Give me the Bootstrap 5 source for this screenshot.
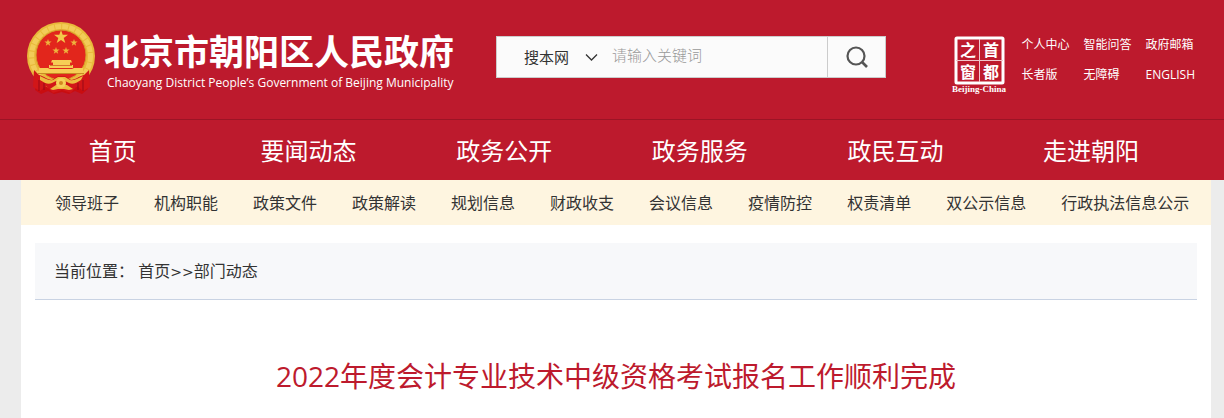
<!DOCTYPE html>
<html lang="zh-CN">
<head>
<meta charset="utf-8">
<meta name="viewport" content="width=device-width, initial-scale=1">
<title>北京市朝阳区人民政府</title>
<link href="https://cdn.jsdelivr.net/npm/bootstrap@5.3.0/dist/css/bootstrap.min.css" rel="stylesheet">
<style>
  body { font-family: "Open Sans", "Noto Sans CJK SC", sans-serif; background: #ececec; color: #333; font-size: 16px; line-height: 24px; }
  a { color: inherit; text-decoration: none; }
  a:hover { color: inherit; text-decoration: underline; }
  .site-top { background: #bd1a2d; color: #fff; }
  .masthead { padding: 22px 20px 23px 26px; }
  .brand-name { font-size: 35px; line-height: 44px; font-weight: 700; margin-top: 8px; }
  .brand-en { font-family: "Open Sans", "Liberation Sans", sans-serif; font-size: 12px; line-height: 18px; padding-left: 3px; }
  .brand-text { width: 360px; margin-left: 8px; }
  .search-box { flex: 0 0 390px; height: 42px; margin: 14px 0 0 32px; background: #fbfbfb; border: 1px solid #ccc; }
  .search-box .scope { width: 101px; padding: 0 24px 0 27px; border: 0; background: transparent; appearance: none; font-size: 15px; color: #333; }
  .scope-wrap svg { position: absolute; right: 0; top: 16px; pointer-events: none; }
  .search-box input { border: 0; background: transparent; padding: 0 0 4px; margin-left: 14px; font-size: 15px; min-width: 0; outline: 0; }
  .search-box input::placeholder { color: #999; opacity: 1; font-weight: 300; }
  .search-box button { width: 58px; border: 0; border-left: 1px solid #ccc; background: transparent; padding: 0; }
  .seal { margin: 14px 14px 0 auto; }
  .quick-links { grid-template-columns: repeat(3, auto); column-gap: 14px; font-size: 12px; line-height: 30px; margin: 8px 9px 0 0; }
  .main-nav { border-top: 1px solid #9b1425; padding: 1px 35px 0 15px; }
  .main-nav a { font-size: 24px; line-height: 60px; }
  .main-nav .row { height: 59px; }
  .page { margin: 0 13px 0 21px; background: #fff; }
  .sub-nav { background: #fef5e0; gap: 35px; padding: 1px 21px 0 34px; height: 45px; line-height: 45px; white-space: nowrap; }
  .crumbs { margin: 18px 14px 0; padding: 0 19px; background: #f7f8fa; border-bottom: 1px solid #c9d3e3; line-height: 56px; }
  .crumb-sep { font-family: "DejaVu Sans", sans-serif; font-size: 14px; line-height: 1; }
  .article-title { font-size: 28px; line-height: 40px; font-weight: 400; color: #bd1a2d; padding: 56px 0 22px; margin: 0; }
</style>
</head>
<body>
<header class="site-top">
  <div class="masthead d-flex align-items-start">
    <a href="#" class="d-flex flex-shrink-0" aria-label="北京市朝阳区人民政府">
      <svg width="70" height="73" viewBox="0 0 70 73" aria-hidden="true">
        <path d="M11 50 L9 68 L15 72 L22 69 L28 72 L36 70 L43 72 L49 69 L56 72 L62 67 L60 50Z" fill="#c90d10"/>
        <circle cx="35" cy="34" r="34" fill="#e9b93a"/>
        <circle cx="35" cy="34" r="29.500" fill="none" stroke="#f2cc58" stroke-width="5" stroke-dasharray="6 1"/>
        <circle cx="35" cy="33" r="25" fill="#e2261c" stroke="#d79a2a"/>
        <path d="M35 8l1.700 4.800h5.300l-4.300 3.200l1.600 5l-4.300-3l-4.300 3l1.600-5l-4.300-3.200h5.300z" fill="#f3c94a"/>
        <g fill="#eeb33d">
          <path id="small-star" d="M22 17l.9 2.600h2.700l-2.200 1.600l.8 2.600l-2.200-1.500l-2.200 1.500l.8-2.600l-2.200-1.600h2.700z"/>
          <use href="#small-star" x="26"/><use href="#small-star" x="8" y="8"/><use href="#small-star" x="18" y="8"/>
        </g>
        <path d="M26 38h19l1 2.500h-21zM27 40h17v3h-17zM23 43h24v3h-24zM13 46h9l2 1h22l2-1h9v5.500h-44z" fill="#f6cd55"/>
        <path d="M24 43.500h22" stroke="#c9501f" stroke-width=".7"/>
        <path d="M12 51.500h46" stroke="#c88a25"/>
        <path d="M8 48l5 5c5 1 9 5 13 5l6-4h7l6 4c4 0 8-4 13-5l5-5l1 17l-7 4l-6-5l-6 7l-9-3l-9 3l-7-7l-6 5l-7-4z" fill="#d21618"/>
        <path d="M14 54c5 2 8 5 13 4l5-3h7l5 3c5 1 8-2 13-4l-2 4c-5 3-8 5-12 3l-4-2h-9l-4 2c-4 2-7 0-12-3z" fill="#edbb40"/>
        <path d="M24 67l6-4h11l6 4l-4 1l-5-1h-6l-5 1z" fill="#edbb40"/>
        <circle cx="35" cy="61" r="5" fill="#f6cf58"/><circle cx="35" cy="61" r="2" fill="#d38820"/>
        <path d="M13 58v11M18 61v7M57 58v11M52 61v7" stroke="#970916"/>
      </svg>
      <span class="brand-text">
        <span class="brand-name d-block">北京市朝阳区人民政府</span>
        <span class="brand-en d-block text-nowrap">Chaoyang District People’s Government of Beijing Municipality</span>
      </span>
    </a>
    <form class="search-box d-flex" role="search">
      <div class="scope-wrap position-relative d-flex">
        <select class="scope" aria-label="搜索范围"><option>搜本网</option></select>
        <svg width="13" height="9" viewBox="0 0 13 9" aria-hidden="true"><path d="M1 1.500l5.500 5.500L12 1.500" fill="none" stroke="#333" stroke-width="1.300"/></svg>
      </div>
      <input class="flex-fill" type="text" placeholder="请输入关键词" aria-label="请输入关键词">
      <button type="submit" aria-label="搜索">
        <svg width="24" height="24" viewBox="0 0 24 24" aria-hidden="true"><circle cx="11" cy="10" r="8.500" fill="none" stroke="#555" stroke-width="2.200"/><path d="M17 16l5 5" stroke="#555" stroke-width="2.600"/></svg>
      </button>
    </form>
    <a href="#" class="seal" aria-label="首都之窗">
      <svg class="d-block" width="56" height="60" viewBox="0 0 56 60" aria-hidden="true">
        <rect x="5" y="2" width="47" height="45" rx="1" fill="none" stroke="#fff" stroke-width="3"/>
        <path d="M28.500 3v43M5 24.500h47" stroke="#f0c5ca" stroke-width="1"/>
        <g fill="#fff" font-family="'Noto Sans CJK SC',sans-serif" font-weight="700" font-size="16" text-anchor="middle">
          <text x="17" y="20">之</text><text x="40" y="20">首</text><text x="17" y="42">窗</text><text x="40" y="42">都</text>
        </g>
        <text x="28" y="56" fill="#fff" font-family="'Liberation Serif',serif" font-weight="700" font-size="9" text-anchor="middle">Beijing-China</text>
      </svg>
    </a>
    <nav class="quick-links d-grid text-nowrap" aria-label="快捷链接">
      <a href="#">个人中心</a><a href="#">智能问答</a><a href="#">政府邮箱</a>
      <a href="#">长者版</a><a href="#">无障碍</a><a href="#">ENGLISH</a>
    </nav>
  </div>
  <nav class="main-nav" aria-label="主导航">
    <div class="row g-0 row-cols-6 text-center text-nowrap">
      <a class="col" href="#">首页</a><a class="col" href="#">要闻动态</a><a class="col" href="#">政务公开</a><a class="col" href="#">政务服务</a><a class="col" href="#">政民互动</a><a class="col" href="#">走进朝阳</a>
    </div>
  </nav>
</header>
<main class="page">
  <nav class="sub-nav d-flex" aria-label="栏目">
    <a href="#">领导班子</a><a href="#">机构职能</a><a href="#">政策文件</a><a href="#">政策解读</a><a href="#">规划信息</a><a href="#">财政收支</a><a href="#">会议信息</a><a href="#">疫情防控</a><a href="#">权责清单</a><a href="#">双公示信息</a><a href="#">行政执法信息公示</a>
  </nav>
  <div class="crumbs">当前位置： <a href="#">首页</a><span class="crumb-sep">&gt;&gt;</span><a href="#">部门动态</a></div>
  <h1 class="article-title text-center">2022年度会计专业技术中级资格考试报名工作顺利完成</h1>
</main>
<script src="https://cdn.jsdelivr.net/npm/bootstrap@5.3.0/dist/js/bootstrap.bundle.min.js"></script>
</body>
</html>
